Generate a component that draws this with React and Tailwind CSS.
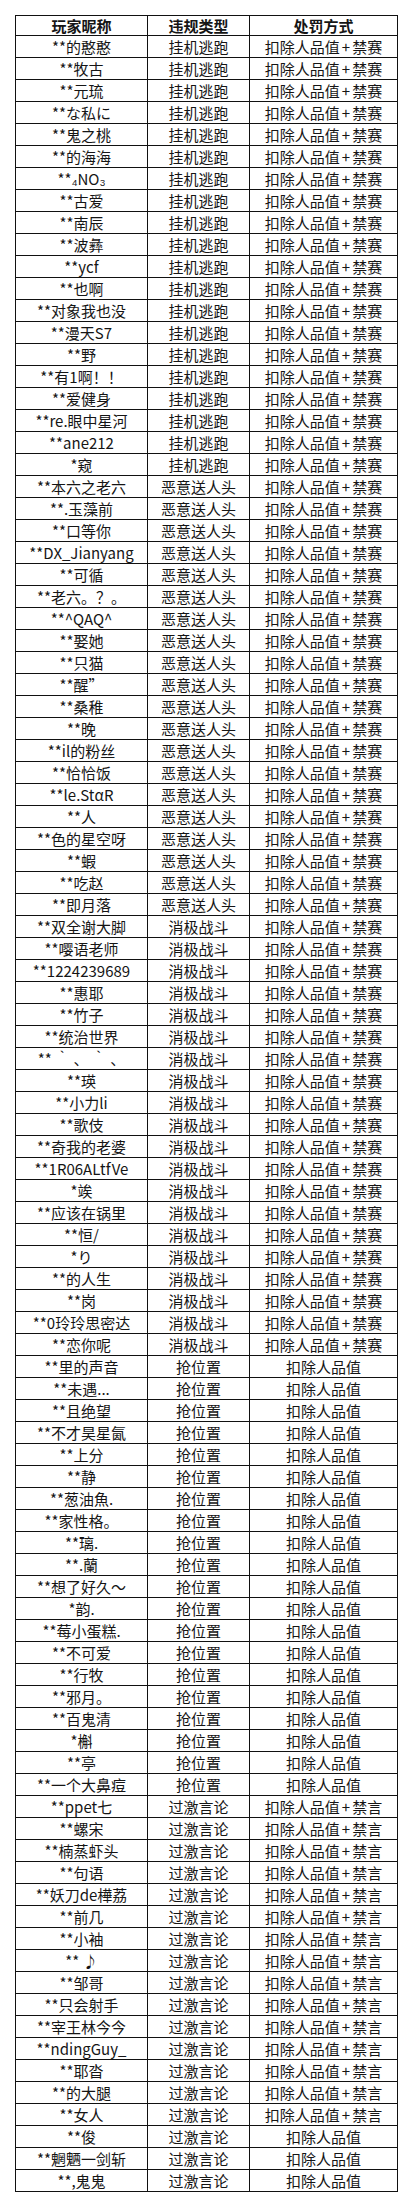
import React from 'react';

const groups = [
  {
    type: '挂机逃跑',
    punish: '扣除人品值+禁赛',
    names: ['**的憨憨', '**牧古', '**元琉', '**な私に', '**鬼之桃', '**的海海', '**₄NO₃', '**古爱', '**南辰', '**波彝', '**ycf', '**也啊', '**对象我也没', '**漫天S7', '**野', '**有1啊！！', '**爱健身', '**re.眼中星河', '**ane212', '*窥'],
  },
  {
    type: '恶意送人头',
    punish: '扣除人品值+禁赛',
    names: ['**本六之老六', '**.玉藻前', '**口等你', '**DX_Jianyang', '**可循', '**老六。？。', '**^QAQ^', '**娶她', '**只猫', '**醒”', '**桑稚', '**晚', '**il的粉丝', '**恰恰饭', '**le.StαR', '**人', '**色的星空呀', '**蝦', '**吃赵', '**即月落'],
  },
  {
    type: '消极战斗',
    punish: '扣除人品值+禁赛',
    names: ['**双全谢大脚', '**嘤语老师', '**1224239689', '**惠耶', '**竹子', '**统治世界', '** ｀ 、 ｀ 、', '**瑛', '**小力li', '**歌伎', '**奇我的老婆', '**1R06ALtfVe', '*竢', '**应该在锅里', '**恒/', '*り', '**的人生', '**岗', '**0玲玲思密达', '**恋你呢'],
  },
  {
    type: '抢位置',
    punish: '扣除人品值',
    names: ['**里的声音', '**未遇...', '**且绝望', '**不才昊星氤', '**上分', '**静', '**葱油魚.', '**家性格。', '**璃.', '**.蘭', '**想了好久～', '*韵.', '**莓小蛋糕.', '**不可爱', '**行牧', '**邪月。', '**百鬼清', '*槲', '**亭', '**一个大鼻痘'],
  },
  {
    type: '过激言论',
    punish: '扣除人品值+禁言',
    names: ['**ppet七', '**螺宋', '**楠蒸虾头', '**句语', '**妖刀de樺荔', '**前几', '**小袖', '** ♪', '**邹哥', '**只会射手', '**宰王林今今', '**ndingGuy_', '**耶沓', '**的大腿', '**女人'],
  },
  {
    type: '过激言论',
    punish: '扣除人品值',
    names: ['**俊', '**魍魉一剑斩', '**,鬼鬼'],
  },
];

const rows = groups.flatMap((g) => g.names.map((name) => ({ name, type: g.type, punish: g.punish })));

// the "+" is set a little wider in the original
const Punish = ({ text }) => {
  const [a, b] = text.split('+');
  if (!b) return text;
  return (
    <>
      {a}
      <span className="px-[2px]">+</span>
      {b}
    </>
  );
};

const Row = ({ name, type, punish }) => (
  <div className="flex h-[22px] border-b border-[#111]">
    <div className="w-[132px] border-r border-[#111] flex items-center justify-center whitespace-pre">{name}</div>
    <div className="w-[102px] border-r border-[#111] flex items-center justify-center">{type}</div>
    <div className="flex-1 flex items-center justify-center">
      <Punish text={punish} />
    </div>
  </div>
);

export default function App() {
  return (
    <div className="w-[413px] min-h-[2207px] bg-white px-[15px] pt-[15px] text-[15px] leading-none text-[#151515] font-['Microsoft_YaHei','Noto_Sans_CJK_SC',sans-serif]">
      <div className="border-t border-l border-r border-[#111]">
        <div className="flex h-[20px] border-b border-[#111] font-bold">
          <div className="w-[132px] border-r border-[#111] flex items-center justify-center">玩家昵称</div>
          <div className="w-[102px] border-r border-[#111] flex items-center justify-center">违规类型</div>
          <div className="flex-1 flex items-center justify-center">处罚方式</div>
        </div>
        {rows.map((r, i) => (
          <Row key={i} {...r} />
        ))}
      </div>
    </div>
  );
}
